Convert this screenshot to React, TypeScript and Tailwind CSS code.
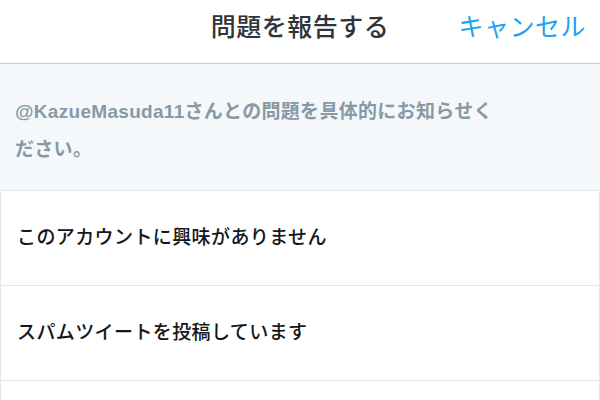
const font = { fontFamily: '"Liberation Sans", "Noto Sans CJK JP", sans-serif' };

const reasons = ["このアカウントに興味がありません", "スパムツイートを投稿しています"];

export default function App() {
    return (
        <div className="w-[600px] h-[400px] overflow-hidden bg-white" style={font}>
            <header className="h-[64px] grid grid-cols-[1fr_auto_1fr] items-center border-b border-[#c4ced6] pb-[8px]">
                <div />
                <h1 className="text-[25px] font-medium text-[#2f3439] tracking-[0.5px]">問題を報告する</h1>
                <button className="justify-self-end pr-[14px] text-[25px] text-[#1da1f2] tracking-[0.5px]">キャンセル</button>
            </header>

            <div className="bg-[#f5f8fa] pt-[29px] pb-[21px] pl-[15px] pr-[95px]">
                <p className="text-[19px] leading-[38px] font-bold text-[#8899a6] tracking-[0.3px]">
                    @KazueMasuda11さんとの問題を具体的にお知らせください。
                </p>
            </div>

            <ul>
                {reasons.map((r) => (
                    <li
                        key={r}
                        className="h-[95px] flex items-center px-[16px] border-t border-x border-[#e1e8ed] text-[19px] font-medium text-[#14171a] tracking-[0.4px]"
                    >
                        {r}
                    </li>
                ))}
                <li className="h-[95px] border-t border-x border-[#e1e8ed]" />
            </ul>
        </div>
    );
}
